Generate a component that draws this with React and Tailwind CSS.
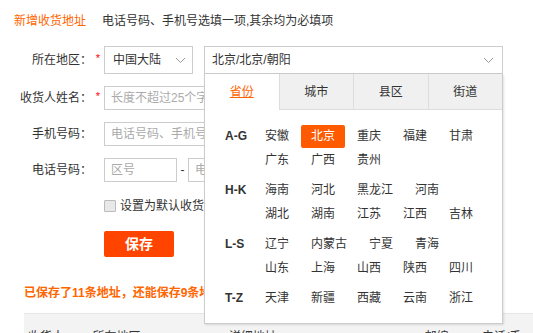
import React from 'react';

const groups = [
    { label: 'A-G', items: ['安徽', '北京', '重庆', '福建', '甘肃', '广东', '广西', '贵州'] },
    { label: 'H-K', items: ['海南', '河北', '黑龙江', '河南', '湖北', '湖南', '江苏', '江西', '吉林'] },
    { label: 'L-S', items: ['辽宁', '内蒙古', '宁夏', '青海', '山东', '上海', '山西', '陕西', '四川'] },
    { label: 'T-Z', items: ['天津', '新疆', '西藏', '云南', '浙江'] },
];

const tabs = ['省份', '城市', '县区', '街道'];

const Chevron = () => (
    <svg width="11" height="7" viewBox="0 0 11 7" className="shrink-0">
        <polyline points="1,1 5.5,5.5 10,1" fill="none" stroke="#999" strokeWidth="1" />
    </svg>
);

// label + red star column used by every form row
const Label = ({ text, star }) => (
    <>
        <span className="w-[78px] text-right text-[#333]">{text}</span>
        <span className="w-[12px] text-center text-[#f00] text-[11px] -mt-[4px]">{star ? '*' : ''}</span>
    </>
);

const RegionPanel = () => (
    <div className="absolute left-0 top-[28px] z-10 w-[299px] h-[250px] bg-white border-x border-b border-[#ccc] shadow-[1px_1px_2px_rgba(0,0,0,0.12)]">
        <div className="flex h-[36px]">
            {tabs.map((t, i) => (
                <div
                    key={t}
                    className={
                        i === 0
                            ? 'flex-1 flex items-center justify-center bg-white text-[#f60] underline'
                            : 'flex-1 flex items-center justify-center bg-[#f0f0f0] border-l border-b border-[#ddd] text-[#333]'
                    }
                >
                    {t}
                </div>
            ))}
        </div>
        <div className="pt-[14px]">
            {groups.map((g) => (
                <div key={g.label} className="flex mb-[6px]">
                    <span className="w-[50px] pl-[20px] h-[24px] leading-[24px] font-bold text-[#333]">{g.label}</span>
                    <div className="w-[235px] flex flex-wrap">
                        {g.items.map((p) => (
                            <span
                                key={p}
                                className={
                                    p === '北京'
                                        ? 'h-[23px] leading-[23px] my-[0.5px] px-[10px] mr-[2px] bg-[#ff5a00] text-white rounded-[2px]'
                                        : 'h-[24px] leading-[24px] px-[10px] mr-[2px] text-[#333]'
                                }
                            >
                                {p}
                            </span>
                        ))}
                    </div>
                </div>
            ))}
        </div>
    </div>
);

export default function App() {
    return (
        <div className="w-[533px] h-[333px] overflow-hidden bg-white text-[12px] font-['Liberation_Sans','Noto_Sans_CJK_SC',sans-serif]">
            <div className="pl-[14px] pt-[13px]">
                <div className="flex h-[16px] leading-[16px]">
                    <span className="text-[#f60]">新增收货地址</span>
                    <span className="ml-[16px] text-[#333]">电话号码、手机号选填一项,其余均为必填项</span>
                </div>

                {/* region row */}
                <div className="flex items-center h-[28px] mt-[17px]">
                    <Label text="所在地区：" star />
                    <div className="w-[89px] h-[28px] border border-[#ccc] flex items-center justify-between pl-[8px] pr-[6px] text-[#333]">
                        <span>中国大陆</span>
                        <Chevron />
                    </div>
                    <div className="relative ml-[11px]">
                        <div className="w-[299px] h-[28px] border border-[#ccc] flex items-center justify-between pl-[7px] pr-[8px] text-[#333]">
                            <span>北京/北京/朝阳</span>
                            <Chevron />
                        </div>
                        <RegionPanel />
                    </div>
                </div>

                <div className="flex items-center h-[24px] mt-[12px]">
                    <Label text="收货人姓名：" star />
                    <input
                        className="w-[300px] h-[24px] border border-[#ccc] px-[6px] outline-none placeholder:text-[#aaa]"
                        placeholder="长度不超过25个字符"
                    />
                </div>

                <div className="flex items-center h-[24px] mt-[12px]">
                    <Label text="手机号码：" />
                    <input
                        className="w-[300px] h-[24px] border border-[#ccc] px-[6px] outline-none placeholder:text-[#aaa]"
                        placeholder="电话号码、手机号码必须填一项"
                    />
                </div>

                <div className="flex items-center h-[24px] mt-[12px]">
                    <Label text="电话号码：" />
                    <input
                        className="w-[73px] h-[24px] border border-[#ccc] px-[6px] outline-none placeholder:text-[#aaa]"
                        placeholder="区号"
                    />
                    <span className="w-[11px] text-center text-[#333]">-</span>
                    <input
                        className="w-[120px] h-[24px] border border-[#ccc] px-[6px] outline-none placeholder:text-[#aaa]"
                        placeholder="电话号码"
                    />
                </div>

                <div className="flex items-center h-[14px] mt-[17px] pl-[90px]">
                    <span className="w-[12px] h-[12px] border border-[#bbb] bg-[#e8e8e8] rounded-[1px]" />
                    <span className="ml-[4px] text-[#333]">设置为默认收货地址</span>
                </div>

                <div className="pl-[90px] mt-[18px]">
                    <button className="w-[70px] h-[26px] bg-[#ff4400] text-white text-[14px] font-bold rounded-[2px]">保存</button>
                </div>

                <div className="ml-[10px] mt-[28px] h-[16px] leading-[16px] font-bold text-[#f60]">
                    已保存了11条地址，还能保存9条地址
                </div>

                <div className="ml-[10px] mt-[12px] h-[36px] bg-[#f3f3f3] border-t border-[#e6e6e6] flex pt-[14px] pl-[4px] text-[#333]">
                    <span className="w-[65px]">收货人</span>
                    <span className="w-[137px]">所在地区</span>
                    <span className="w-[197px]">详细地址</span>
                    <span className="w-[58px]">邮编</span>
                    <span>电话/手机</span>
                </div>
            </div>
        </div>
    );
}
